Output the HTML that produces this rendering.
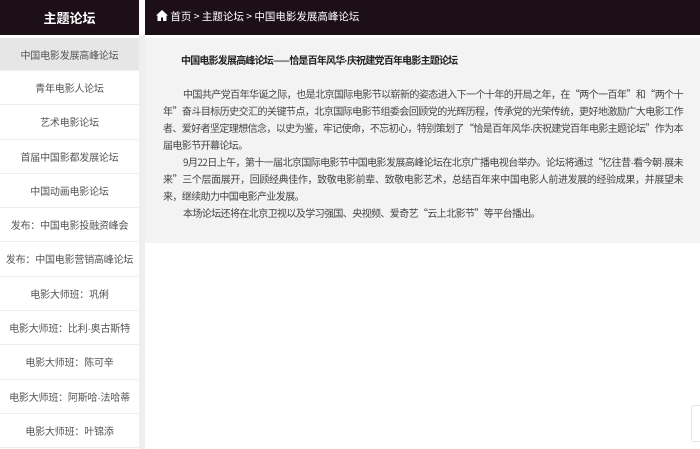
<!DOCTYPE html>
<html><head><meta charset="utf-8"><style>
*{margin:0;padding:0;box-sizing:border-box}
body{width:700px;height:449px;overflow:hidden;background:#fff;font-family:"Noto Sans CJK SC","Liberation Sans",sans-serif;font-size:12px;color:#333;position:relative}
.side{position:absolute;left:0;top:0;width:139px;height:449px}
.sh{height:35px;background:#1d0f17;color:#fff;font-weight:bold;font-size:13px;text-align:center;line-height:35px}
.gap{position:absolute;left:139px;top:0;width:6px;height:449px;background:#efefef}
.gap2{position:absolute;left:139px;top:0;width:6px;height:35px;background:#fff}
.it{height:34.3px;line-height:34px;text-align:center;color:#555;font-size:10px;border-bottom:1px solid #eee;white-space:nowrap;letter-spacing:-0.2px}
.it.a{background:#e6e6e6;height:33px}
.mh{position:absolute;left:145px;top:0;width:555px;height:35px;background:#1d0f17;color:#fff;line-height:34px;padding-left:11px;font-size:10.5px}
.ct{position:absolute;left:145px;top:38px;width:555px;height:205px;background:#f3f3f3;padding:14px 17px 0 18px}
.ct h1{font-size:10px;font-weight:bold;color:#222;padding-left:18px;line-height:16px;margin-bottom:17px;letter-spacing:-0.8px}
.ct p{font-size:10px;line-height:17px;text-indent:2em;color:#444;text-align:justify;letter-spacing:-0.6px}
.d{font-family:"Liberation Sans",sans-serif;line-height:0}
.sb{position:absolute;left:691px;top:405px;width:12px;height:37px;border:1px solid #e6e6e6;border-radius:3px;background:#fff}
</style></head><body>
<div class="side">
<div class="sh">主题论坛</div>
<div style="height:3px"></div>
<div class="it a">中国电影发展高峰论坛</div>
<div class="it">青年电影人论坛</div>
<div class="it">艺术电影论坛</div>
<div class="it">首届中国影都发展论坛</div>
<div class="it">中国动画电影论坛</div>
<div class="it">发布：中国电影投融资峰会</div>
<div class="it">发布：中国电影营销高峰论坛</div>
<div class="it">电影大师班：巩俐</div>
<div class="it">电影大师班：比利<span class="d">·</span>奥古斯特</div>
<div class="it">电影大师班：陈可辛</div>
<div class="it">电影大师班：阿斯哈<span class="d">·</span>法哈蒂</div>
<div class="it">电影大师班：叶锦添</div>
</div>
<div class="gap"></div><div class="gap2"></div>
<div class="mh"><svg width="12" height="11" viewBox="0 0 12 11" style="vertical-align:-1px"><path d="M6 0L0 5.5h1.5V11h3.5V7.5h2V11h3.5V5.5H12z" fill="#fff"/></svg> 首页 &gt; 主题论坛 &gt; 中国电影发展高峰论坛</div>
<div class="ct">
<h1>中国电影发展高峰论坛——恰是百年风华<span class="d">·</span>庆祝建党百年电影主题论坛</h1>
<p>中国共产党百年华诞之际，也是北京国际电影节以崭新的姿态进入下一个十年的开局之年，在“两个一百年”和“两个十年”奋斗目标历史交汇的关键节点，北京国际电影节组委会回顾党的光辉历程，传承党的光荣传统，更好地激励广大电影工作者、爱好者坚定理想信念，以史为鉴，牢记使命，不忘初心，特别策划了“恰是百年风华<span class="d">·</span>庆祝建党百年电影主题论坛”作为本届电影节开幕论坛。</p>
<p>9月22日上午，第十一届北京国际电影节中国电影发展高峰论坛在北京广播电视台举办。论坛将通过“忆往昔<span class="d">·</span>看今朝<span class="d">·</span>展未来”三个层面展开，回顾经典佳作，致敬电影前辈、致敬电影艺术，总结百年来中国电影人前进发展的经验成果，并展望未来，继续助力中国电影产业发展。</p>
<p>本场论坛还将在北京卫视以及学习强国、央视频、爱奇艺“云上北影节”等平台播出。</p>
</div>
<div class="sb"></div>
</body></html>
